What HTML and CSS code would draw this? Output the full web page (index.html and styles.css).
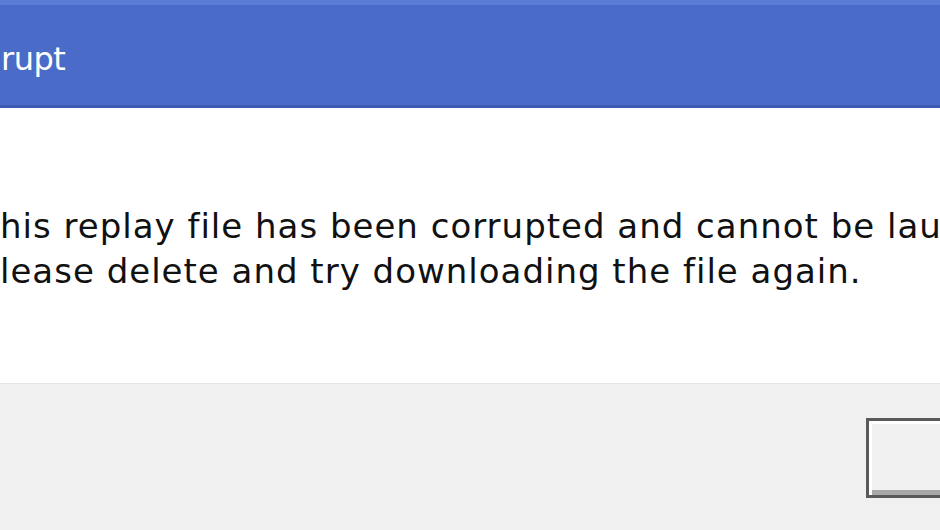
FILE: index.html
```html
<!DOCTYPE html>
<html lang="en">
<head>
    <meta charset="UTF-8">
    <title>Replay File Corrupt</title>
    <link rel="stylesheet" href="styles.css">
</head>
<body>

    <div class="dialog">
        <div class="titlebar">
            <span class="title">rupt</span>
        </div>

        <div class="content">
            <p class="message">his replay file has been corrupted and cannot be lau</p>
            <p class="message">lease delete and try downloading the file again.</p>
        </div>

        <div class="footer">
            <button class="ok-btn"></button>
        </div>
    </div>

</body>
</html>
```

FILE: styles.css
```css
body {
    margin: 0;
    padding: 0;
    overflow: hidden;
    font-family: "DejaVu Sans", Verdana, sans-serif;
}

.dialog {
    display: flex;
    flex-direction: column;
    width: 940px;
    height: 530px;
}

.titlebar {
    background: #4a6bc7;
    border-top: 5px solid #5b7bd5;
    border-bottom: 3px solid #3d5bb2;
    padding: 32px 0 23px 0;
    height: 45px;
}

.title {
    color: white;
    font-size: 32px;
    letter-spacing: -0.5px;
    line-height: 45px;
    margin-left: 1px;
}

.content {
    background: white;
    padding-top: 96px;
    height: 179px;
}

.message {
    margin: 0;
    font-size: 34px;
    letter-spacing: 1px;
    line-height: 45px;
    color: #111;
    white-space: nowrap;
}

.footer {
    flex: 1;
    background: #f0f0f0;
    border-top: 1px solid #e6e6e6;
    display: flex;
    justify-content: flex-end;
    align-items: flex-start;
    padding-top: 34px;
}

.ok-btn {
    width: 120px;
    height: 80px;
    margin-right: -46px;
    background: #f0f0f0;
    border: 3px solid #5a5a5a;
    box-shadow: inset 3px 3px 0 #ffffff, inset -4px -5px 0 #a8a8a8;
}
```
